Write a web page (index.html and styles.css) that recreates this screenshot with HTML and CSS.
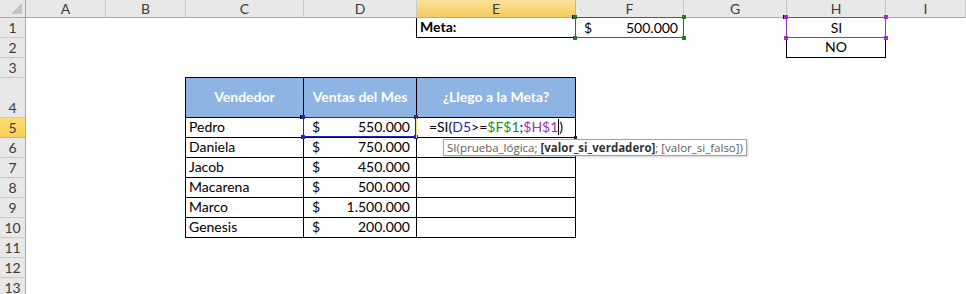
FILE: index.html
```html
<!DOCTYPE html>
<html lang="es">
<head>
<meta charset="utf-8">
<title>Hoja de cálculo</title>
<link rel="stylesheet" href="styles.css">
</head>
<body>
<div class="sheet">
  <div class="ch corner"><span class="tri"></span></div>
  <div class="ch">A</div><div class="ch">B</div><div class="ch">C</div><div class="ch">D</div>
  <div class="ch sel">E</div><div class="ch">F</div><div class="ch">G</div><div class="ch">H</div><div class="ch">I</div>

  <div class="rh">1</div>
  <div class="c"></div><div class="c"></div><div class="c"></div><div class="c"></div>
  <div class="c meta">Meta:</div>
  <div class="c acct rng green"><span>$</span><span>500.000</span><i class="hd tl"></i><i class="hd tr"></i><i class="hd bl"></i><i class="hd br"></i></div>
  <div class="c"></div>
  <div class="c ctr rng purple">SI<i class="hd tl"></i><i class="hd tr"></i><i class="hd bl"></i><i class="hd br"></i></div>
  <div class="c"></div>

  <div class="rh">2</div>
  <div class="c"></div><div class="c"></div><div class="c"></div><div class="c"></div><div class="c"></div><div class="c"></div><div class="c"></div>
  <div class="c ctr t tl">NO</div>
  <div class="c"></div>

  <div class="rh">3</div>
  <div class="c"></div><div class="c"></div><div class="c"></div><div class="c"></div><div class="c"></div><div class="c"></div><div class="c"></div><div class="c"></div><div class="c"></div>

  <div class="rh">4</div>
  <div class="c"></div><div class="c"></div>
  <div class="c th t tlt">Vendedor</div>
  <div class="c th t tt">Ventas del Mes</div>
  <div class="c th t tt">¿Llego a la Meta?</div>
  <div class="c"></div><div class="c"></div><div class="c"></div><div class="c"></div>

  <div class="rh sel">5</div>
  <div class="c"></div><div class="c"></div>
  <div class="c t tl">Pedro</div>
  <div class="c acct t rng blue"><span>$</span><span>550.000</span><i class="hd tl"></i><i class="hd tr"></i><i class="hd bl"></i><i class="hd br"></i></div>
  <div class="c ctr t edit"><span>=SI(</span><span class="fb">D5</span><span>&gt;=</span><span class="fg">$F$1</span><span>;</span><span class="fp">$H$1</span><span class="caret"></span><span>)</span><i class="fill"></i></div>
  <div class="c"></div><div class="c"></div><div class="c"></div><div class="c"></div>

  <div class="rh">6</div>
  <div class="c"></div><div class="c"></div>
  <div class="c t tl">Daniela</div>
  <div class="c acct t"><span>$</span><span>750.000</span></div>
  <div class="c t tip-host"><div class="tip">SI(prueba_lógica; <b>[valor_si_verdadero]</b>; [valor_si_falso])</div></div>
  <div class="c"></div><div class="c"></div><div class="c"></div><div class="c"></div>

  <div class="rh">7</div>
  <div class="c"></div><div class="c"></div>
  <div class="c t tl">Jacob</div>
  <div class="c acct t"><span>$</span><span>450.000</span></div>
  <div class="c t"></div>
  <div class="c"></div><div class="c"></div><div class="c"></div><div class="c"></div>

  <div class="rh">8</div>
  <div class="c"></div><div class="c"></div>
  <div class="c t tl">Macarena</div>
  <div class="c acct t"><span>$</span><span>500.000</span></div>
  <div class="c t"></div>
  <div class="c"></div><div class="c"></div><div class="c"></div><div class="c"></div>

  <div class="rh">9</div>
  <div class="c"></div><div class="c"></div>
  <div class="c t tl">Marco</div>
  <div class="c acct t"><span>$</span><span>1.500.000</span></div>
  <div class="c t"></div>
  <div class="c"></div><div class="c"></div><div class="c"></div><div class="c"></div>

  <div class="rh">10</div>
  <div class="c"></div><div class="c"></div>
  <div class="c t tl">Genesis</div>
  <div class="c acct t"><span>$</span><span>200.000</span></div>
  <div class="c t"></div>
  <div class="c"></div><div class="c"></div><div class="c"></div><div class="c"></div>

  <div class="rh">11</div>
  <div class="c"></div><div class="c"></div><div class="c"></div><div class="c"></div><div class="c"></div><div class="c"></div><div class="c"></div><div class="c"></div><div class="c"></div>

  <div class="rh">12</div>
  <div class="c"></div><div class="c"></div><div class="c"></div><div class="c"></div><div class="c"></div><div class="c"></div><div class="c"></div><div class="c"></div><div class="c"></div>

  <div class="rh">13</div>
  <div class="c"></div><div class="c"></div><div class="c"></div><div class="c"></div><div class="c"></div><div class="c"></div><div class="c"></div><div class="c"></div><div class="c"></div>
</div>
</body>
</html>
```

FILE: styles.css
```css
html, body {
  margin: 0;
  padding: 0;
  background: #fff;
  overflow: hidden;
}

.sheet {
  display: grid;
  grid-template-columns: 26px 80px 80px 118px 113px 159px 108px 103px 99px 80px;
  grid-template-rows: 18px 20px 20px 20px 40px repeat(9, 20px);
  width: 966px;
  font-family: Lato, "Open Sans", sans-serif;
  color: #000;
}

.sheet > div {
  box-sizing: border-box;
  min-width: 0;
}

/* column headers */
.ch {
  background: #e8e8e8;
  border-right: 1px solid #c9c9c9;
  border-bottom: 1px solid #a9a9a9;
  color: #3b3b3b;
  font-size: 14px;
  display: flex;
  align-items: center;
  justify-content: center;
  line-height: 1;
  padding-top: 1px;
}

.ch.sel {
  background: linear-gradient(#fbe29a, #f5cc5e);
  border-bottom-color: #e2a63c;
  border-right-color: #d9b45a;
}

.corner {
  position: relative;
  border-right-color: #a9a9a9;
}

.corner .tri {
  position: absolute;
  right: 3px;
  bottom: 3px;
  width: 0;
  height: 0;
  border-left: 11px solid transparent;
  border-bottom: 11px solid #c4c4c4;
}

/* row headers */
.rh {
  background: #e8e8e8;
  border-right: 1px solid #a9a9a9;
  border-bottom: 1px solid #c9c9c9;
  color: #3b3b3b;
  font-size: 14px;
  display: flex;
  align-items: flex-end;
  justify-content: center;
  line-height: 17px;
  padding-bottom: 1px;
}

.rh.sel {
  background: linear-gradient(#fddc72, #f8cf5a);
  border-bottom-color: #e2b246;
  border-right-color: #e2a63c;
}

/* cells */
.c {
  position: relative;
  display: flex;
  align-items: flex-end;
  padding: 0 3px 1px 3px;
  font-size: 14px;
  line-height: 18px;
  white-space: nowrap;
}

.ctr { justify-content: center; }

.meta {
  font-weight: 700;
  border-right: 1px solid #000;
  border-bottom: 1px solid #000;
  box-shadow: -1px 0 0 #000;
}

.acct {
  justify-content: space-between;
  padding: 0 6px 1px 8px;
}

.t {
  border-right: 1px solid #000;
  border-bottom: 1px solid #000;
}

.tl { box-shadow: -1px 0 0 #000; }
.tt { box-shadow: 0 -1px 0 #000; }
.tlt { box-shadow: -1px 0 0 #000, 0 -1px 0 #000, -1px -1px 0 #000; }

.th {
  background: #8db4e2;
  color: #fff;
  font-weight: 700;
  align-items: center;
  justify-content: center;
  padding: 0 2px 2px;
}

/* range highlights */
.rng::after {
  content: "";
  position: absolute;
  left: -1px;
  top: -1px;
  right: 0;
  bottom: 0;
  border: 1px solid currentColor;
  z-index: 2;
  pointer-events: none;
}

.rng.green::after { border-color: #1f7d1f; }
.rng.purple::after { border-color: #9c2fc0; }
.rng.blue::after { border-color: #2424b8; }

.hd {
  position: absolute;
  width: 4px;
  height: 4px;
  z-index: 3;
}

.green .hd { background: #1f7d1f; }
.purple .hd { background: #9c2fc0; }
.blue .hd { background: #2424b8; }

.hd.tl { left: -3px; top: -3px; }
.hd.tr { right: -2px; top: -3px; }
.hd.bl { left: -3px; bottom: -2px; }
.hd.br { right: -2px; bottom: -2px; }

/* edited cell */
.edit::before {
  content: "";
  position: absolute;
  left: -1px;
  top: 0;
  bottom: -1px;
  width: 1px;
  background: #f0dc7a;
  z-index: 4;
}

.fb { color: #2a2ab8; }
.fg { color: #1f8a1f; }
.fp { color: #a02db8; }

.caret {
  display: inline-block;
  width: 1px;
  height: 16px;
  background: #000;
  align-self: flex-end;
  margin-bottom: 1px;
}

.fill {
  position: absolute;
  right: -2px;
  bottom: -2px;
  width: 3px;
  height: 3px;
  background: #222;
  z-index: 3;
}

/* tooltip */
.tip {
  position: absolute;
  left: 26px;
  top: 1px;
  height: 17px;
  box-sizing: border-box;
  padding: 0 3px;
  background: #fff;
  border: 1px solid #a3a3a3;
  box-shadow: 1px 1px 2px rgba(0, 0, 0, 0.18);
  font-family: "Open Sans", "DejaVu Sans", sans-serif;
  font-size: 11.5px;
  line-height: 15px;
  color: #5c5c5c;
  white-space: nowrap;
  z-index: 10;
}

.tip b {
  color: #333;
  font-weight: 700;
}
```
